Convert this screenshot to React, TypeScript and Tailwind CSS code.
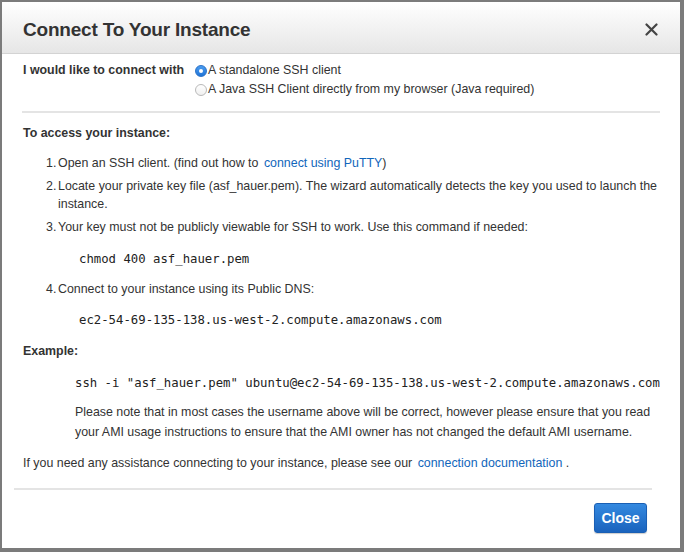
import React from 'react';

const mono = "font-['DejaVu_Sans_Mono',monospace] text-[12.3px] leading-[18px] text-[#222]";

function Radio({ checked }: { checked?: boolean }) {
  return checked ? (
    <span className="w-[12px] h-[12px] rounded-full bg-gradient-to-b from-[#4a9cf0] to-[#1f74d6] border border-[#2a72c8] flex items-center justify-center shrink-0">
      <span className="w-[4px] h-[4px] rounded-full bg-white" />
    </span>
  ) : (
    <span className="w-[12px] h-[12px] rounded-full bg-gradient-to-b from-white to-[#f0f0f0] border border-[#b9b9b9] shrink-0" />
  );
}

export default function App() {
  return (
    <div className="w-[684px] h-[552px] bg-white border-[#7b7b7b] border-t-2 border-l-2 border-r-4 border-b-4 flex flex-col font-['Liberation_Sans',Arial,sans-serif] text-[#333]">
      {/* Header */}
      <div className="h-[52px] shrink-0 flex items-center justify-between pl-[21px] pr-[22px] pt-[5px] bg-gradient-to-b from-white to-[#e6e6e6] border-b border-[#d3d3d3]">
        <h1 className="text-[19px] font-bold text-[#333] tracking-[-0.2px]">Connect To Your Instance</h1>
        <svg width="13" height="13" viewBox="0 0 13 13" className="-mt-[2px]">
          <path d="M1.5 1.5 L11.5 11.5 M11.5 1.5 L1.5 11.5" stroke="#444" strokeWidth="2.2" strokeLinecap="round" />
        </svg>
      </div>

      {/* Body */}
      <div className="flex-1 pl-[21px] pr-[20px] pt-[7px] text-[12.4px]">
        <div className="flex">
          <div className="font-bold leading-[19px] w-[172px]">I would like to connect with</div>
          <div className="flex flex-col">
            <label className="flex items-center leading-[19px]">
              <Radio checked />
              <span className="ml-[1px]">A standalone SSH client</span>
            </label>
            <label className="flex items-center leading-[19px]">
              <Radio />
              <span className="ml-[1px]">A Java SSH Client directly from my browser (Java required)</span>
            </label>
          </div>
        </div>

        <div className="mt-[12px] h-[2px] bg-[#e4e4e4] -ml-px" />

        <div className="mt-[11px] font-bold leading-[18px]">To access your instance:</div>

        <ol className="mt-[12px] pl-[23px] leading-[18px]">
          <li className="flex">
            <span className="w-[12px] shrink-0">1.</span>
            <span>
              Open an SSH client. (find out how to{' '}
              <a className="text-[#1166bb] ml-[2px]">connect using PuTTY</a>)
            </span>
          </li>
          <li className="flex mt-[5px]">
            <span className="w-[12px] shrink-0">2.</span>
            <span>
              Locate your private key file (asf_hauer.pem). The wizard automatically detects the key you used to launch the
              instance.
            </span>
          </li>
          <li className="flex mt-[5px]">
            <span className="w-[12px] shrink-0">3.</span>
            <span>Your key must not be publicly viewable for SSH to work. Use this command if needed:</span>
          </li>
        </ol>

        <div className={`${mono} mt-[14px] pl-[56px]`}>chmod 400 asf_hauer.pem</div>

        <ol className="mt-[12px] pl-[23px] leading-[18px]">
          <li className="flex">
            <span className="w-[12px] shrink-0">4.</span>
            <span>Connect to your instance using its Public DNS:</span>
          </li>
        </ol>

        <div className={`${mono} mt-[13px] pl-[56px]`}>ec2-54-69-135-138.us-west-2.compute.amazonaws.com</div>

        <div className="mt-[13px] font-bold leading-[18px]">Example:</div>

        <div className="pl-[52px]">
          <div className={`${mono} mt-[14px] whitespace-nowrap`}>
            ssh -i "asf_hauer.pem" ubuntu@ec2-54-69-135-138.us-west-2.compute.amazonaws.com
          </div>
          <p className="mt-[10px] leading-[20px]">
            Please note that in most cases the username above will be correct, however please ensure that you read
            your AMI usage instructions to ensure that the AMI owner has not changed the default AMI username.
          </p>
        </div>

        <p className="mt-[12px] leading-[18px]">
          If you need any assistance connecting to your instance, please see our{' '}
          <a className="text-[#1166bb] ml-[2px]">connection documentation</a> .
        </p>
      </div>

      {/* Footer */}
      <div className="shrink-0">
        <div className="h-[2px] bg-[#e4e4e4] ml-[12px] mr-[28px]" />
        <div className="flex justify-end pr-[33px] pt-[13px] pb-[15px]">
          <button className="w-[53px] h-[30px] rounded-[3px] bg-gradient-to-b from-[#3489e0] to-[#1a63bd] border border-[#1a5fb4] text-white font-bold text-[14px] shadow-[0_1px_1px_rgba(0,0,0,0.2)]">
            Close
          </button>
        </div>
      </div>
    </div>
  );
}
